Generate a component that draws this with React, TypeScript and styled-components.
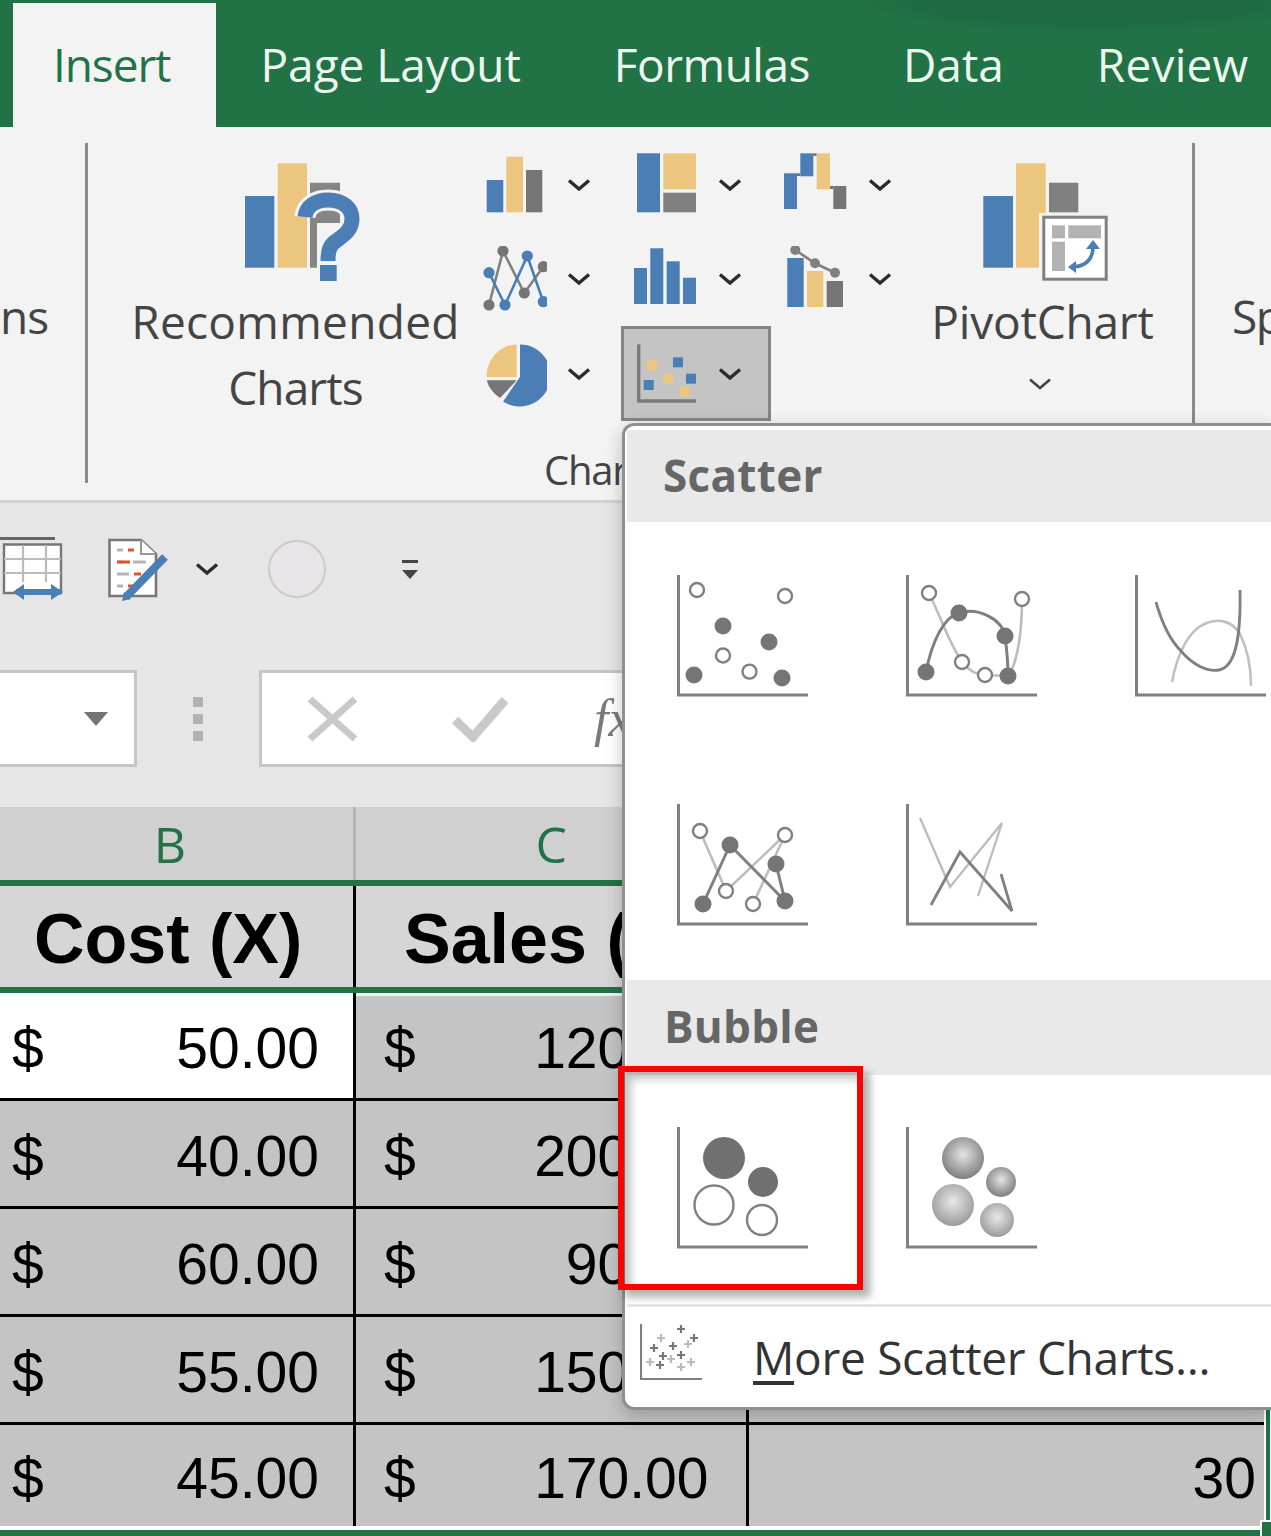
import React from "react";
import styled, { createGlobalStyle } from "styled-components";

const GREEN = "#217346";
const BLUE = "#4a7eb5";
const ORANGE = "#ecc67f";
const GRAY = "#757575";
const UI_FONT = '"Open Sans", "Noto Sans", sans-serif';
const SHEET_FONT = '"Liberation Sans", Arial, sans-serif';

const Global = createGlobalStyle`
  html, body { margin: 0; padding: 0; background: #fff; }
  * { box-sizing: border-box; }
`;

const Page = styled.div`
  position: relative;
  width: 1271px;
  height: 1536px;
  overflow: hidden;
  font-family: ${UI_FONT};
`;

/* ---------- tabs ---------- */
const TabBar = styled.div`
  display: flex;
  height: 127px;
  padding: 3px 0 0 13px;
  background: radial-gradient(ellipse 240px 34px at 1090px 0, #1f6a41 0 70%, transparent 100%), ${GREEN};
  overflow: hidden;
`;
const Tab = styled.div<{ $ls: string }>`
  flex: none;
  padding: 0 46.5px 3px;
  display: flex;
  align-items: center;
  height: 124px;
  font-size: 46px;
  letter-spacing: ${(p) => p.$ls};
  white-space: nowrap;
  color: #eef5f0;
`;
const ActiveTab = styled(Tab)`
  width: 203px;
  padding-left: 40px;
  margin-right: -2px;
  background: #f3f3f3;
  color: ${GREEN};
`;

/* ---------- ribbon ---------- */
const Ribbon = styled.div`
  display: flex;
  height: 376px;
  background: #f3f3f3;
  border-bottom: 3px solid #d2d2d2;
  color: #444;
  font-size: 46px;
  line-height: 66px;
  overflow: hidden;
`;
const Clipped = styled.div<{ $w: number; $top: number; $ml?: number; $ls?: string }>`
  flex: none;
  width: ${(p) => p.$w}px;
  margin-left: ${(p) => p.$ml ?? 0}px;
  padding-top: ${(p) => p.$top}px;
  letter-spacing: ${(p) => p.$ls ?? "0"};
  white-space: nowrap;
`;
const GroupRule = styled.div<{ $h: number; $ml?: number }>`
  flex: none;
  width: 3px;
  height: ${(p) => p.$h}px;
  margin-top: 16px;
  margin-left: ${(p) => p.$ml ?? 0}px;
  background: #8a8a8a;
`;
const ChartsGroup = styled.div`
  flex: none;
  width: 1104px;
  display: flex;
  flex-direction: column;
`;
const ChartsRow = styled.div`
  display: flex;
  height: 294px;
`;
const BigButton = styled.div<{ $ml: number; $w: number }>`
  flex: none;
  width: ${(p) => p.$w}px;
  margin-left: ${(p) => p.$ml}px;
  padding-top: 36px;
  display: flex;
  flex-direction: column;
  align-items: center;
  text-align: center;
  white-space: nowrap;
`;
const BigIcon = styled.svg<{ $shift: number }>`
  display: block;
  width: 125px;
  height: 118px;
  margin-bottom: 7px;
  margin-left: ${(p) => p.$shift}px;
`;
const BigLabel = styled.div<{ $ls: string }>`
  letter-spacing: ${(p) => p.$ls};
`;
const ChartGrid = styled.div`
  flex: none;
  width: 450px;
  margin-top: 11px;
  margin-left: 12px;
  display: grid;
  grid-template-columns: repeat(3, 150px);
  grid-template-rows: 94px 94px 95px;
`;
const ChartCell = styled.div<{ $selected?: boolean }>`
  display: flex;
  align-items: center;
  padding-left: 10px;
  background: ${(p) => (p.$selected ? "#c4c4c4" : "transparent")};
  box-shadow: ${(p) => (p.$selected ? "inset 0 0 0 3px #858585" : "none")};
`;
const ChartGlyph = styled.svg`
  flex: none;
  width: 66px;
  height: 66px;
`;
const ChevronMark = styled.svg<{ $ml?: number; $mt?: number }>`
  flex: none;
  display: block;
  width: 24px;
  height: 14px;
  margin-left: ${(p) => p.$ml ?? 0}px;
  margin-top: ${(p) => p.$mt ?? 0}px;
`;
const GroupLabel = styled.div`
  margin-top: 24px;
  padding-left: 456px;
  font-size: 40px;
  line-height: 50px;
  letter-spacing: -1.2px;
  white-space: nowrap;
`;

/* ---------- quick access + formula bar ---------- */
const Toolbars = styled.div`
  height: 304px;
  padding: 34px 0 40px;
  display: flex;
  flex-direction: column;
  gap: 70px;
  background: #e6e6e6;
`;
const QuickRow = styled.div`
  display: flex;
  align-items: center;
  height: 63px;
`;
const QuickIcon = styled.svg<{ $w: number; $ml: number }>`
  flex: none;
  width: ${(p) => p.$w}px;
  height: 64px;
  margin-left: ${(p) => p.$ml}px;
`;
const RecordDot = styled.div`
  flex: none;
  width: 58px;
  height: 58px;
  margin-left: 49px;
  border: 2px solid #cbcbcb;
  border-radius: 50%;
  background: #e8e4e8;
`;
const FormulaRow = styled.div`
  display: flex;
  height: 97px;
`;
const NameBox = styled.div`
  flex: none;
  width: 137px;
  border: 3px solid #c6c6c6;
  border-left: 0;
  background: #fff;
  display: flex;
  align-items: center;
  justify-content: flex-end;
  padding-right: 26px;
`;
const GripColumn = styled.div`
  flex: none;
  width: 122px;
  display: flex;
  flex-direction: column;
  align-items: center;
  justify-content: center;
  gap: 7px;
`;
const GripDot = styled.span`
  width: 10px;
  height: 10px;
  background: #b2b2b2;
`;
const FormulaBox = styled.div`
  flex: 1;
  border: 3px solid #c6c6c6;
  border-right: 0;
  background: #fff;
  display: flex;
  align-items: center;
  padding-left: 45px;
`;
const FormulaGlyph = styled.svg<{ $mr: number }>`
  flex: none;
  margin-right: ${(p) => p.$mr}px;
`;
const FxMark = styled.span`
  font-family: "Liberation Serif", serif;
  font-style: italic;
  font-size: 52px;
  color: #7a7a7a;
`;

/* ---------- sheet ---------- */
const ColumnHeads = styled.div`
  display: grid;
  grid-template-columns: 356px 392.5px 1fr;
  height: 73px;
  background: #d0d0d0;
`;
const ColumnHead = styled.div<{ $pr?: number }>`
  display: flex;
  align-items: center;
  justify-content: center;
  padding-right: ${(p) => p.$pr ?? 0}px;
  border-right: 3px solid #b4b4b4;
  font-size: 50px;
  letter-spacing: -1px;
  color: ${GREEN};
`;
const GreenRule = styled.div`
  height: 6px;
  background: ${GREEN};
`;
const HeaderRow = styled.div`
  display: grid;
  grid-template-columns: 356px 392.5px 1fr;
  height: 101px;
  background: #d6d6d6;
`;
const HeaderCell = styled.div<{ $pl: number }>`
  display: flex;
  align-items: center;
  padding: 4px 0 0 ${(p) => p.$pl}px;
  border-right: 3px solid #000;
  font-family: ${SHEET_FONT};
  font-size: 70px;
  font-weight: 700;
  color: #000;
  white-space: nowrap;
  overflow: hidden;
`;
const DataArea = styled.div`
  position: relative;
  margin-right: 1px;
  padding-right: 2px;
  border-right: 4px solid ${GREEN};
  background: #fff;
`;
const DataRow = styled.div<{ $last?: boolean }>`
  display: grid;
  grid-template-columns: 356px 392.5px 1fr;
  height: ${(p) => (p.$last ? 101 : 108)}px;
  background: #c4c4c4;
  border-bottom: ${(p) => (p.$last ? "0" : "3px solid #000")};
`;
const MoneyCell = styled.div<{ $white?: boolean; $pl: number; $pr: number; $first?: boolean }>`
  display: flex;
  align-items: center;
  justify-content: space-between;
  padding: 4px ${(p) => p.$pr}px 0 ${(p) => p.$pl}px;
  border-right: 3px solid #000;
  background: ${(p) => (p.$white ? "#fff" : "transparent")};
  box-shadow: ${(p) => (p.$first ? "inset 0 3px 0 #f2f2f2" : "none")};
  font-family: ${SHEET_FONT};
  font-size: 57px;
  color: #000;
`;
const CountCell = styled.div`
  display: flex;
  align-items: center;
  justify-content: flex-end;
  padding: 4px 8px 0 0;
  font-family: ${SHEET_FONT};
  font-size: 57px;
  color: #000;
`;
const SelectionFoot = styled.div`
  position: relative;
  height: 10px;
  border-top: 4px solid #fff;
  background: ${GREEN};
  &::after {
    content: "";
    box-sizing: border-box;
    position: absolute;
    right: 0;
    bottom: 0;
    width: 11px;
    height: 16px;
    background: ${GREEN};
    border: 2px solid #fff;
    border-right: 0;
    border-bottom: 0;
  }
`;

/* ---------- dropdown ---------- */
const Menu = styled.div`
  position: absolute;
  left: 622px;
  top: 423px;
  right: 0;
  height: 987px;
  padding: 4px 0 0 2px;
  background: #fff;
  border: 3px solid #8f8f8f;
  border-right: 0;
  border-radius: 12px 0 0 12px;
  box-shadow: 0 6px 18px rgba(0, 0, 0, 0.22);
`;
const MenuHeading = styled.div<{ $h: number; $pl: number }>`
  height: ${(p) => p.$h}px;
  padding: 0 0 3px ${(p) => p.$pl}px;
  display: flex;
  align-items: center;
  background: #e9e9e9;
  color: #666;
  font-size: 44px;
  font-weight: 700;
  letter-spacing: 0.3px;
`;
const MenuGrid = styled.div<{ $rowH: number }>`
  display: grid;
  grid-template-columns: repeat(3, 229px);
  grid-auto-rows: ${(p) => p.$rowH}px;
`;
const MenuItem = styled.div<{ $top: number }>`
  position: relative;
  padding: ${(p) => p.$top}px 0 0 50px;
`;
const SelectedItem = styled(MenuItem)`
  &::after {
    content: "";
    box-sizing: border-box;
    position: absolute;
    left: -9px;
    top: -9px;
    width: 245px;
    height: 224px;
    border: 6px solid #ff0000;
    box-shadow: 7px 7px 8px rgba(0, 0, 0, 0.32), inset 7px 7px 9px rgba(0, 0, 0, 0.24);
  }
`;
const ChartThumb = styled.svg`
  display: block;
  width: 131px;
  height: 122px;
`;
const MenuRule = styled.div`
  height: 3px;
  background: #e3e3ea;
`;
const MoreRow = styled.div`
  display: flex;
  align-items: center;
  height: 100px;
  padding-left: 13px;
  color: #333;
  font-size: 46px;
  white-space: nowrap;
`;
const MoreIcon = styled.svg`
  flex: none;
  width: 64px;
  height: 58px;
  margin-right: 49px;
  margin-top: -8px;
`;
const MoreLabel = styled.span`
  letter-spacing: -0.3px;
  u {
    text-underline-offset: 6px;
  }
`;

/* ---------- drawings ---------- */
const Chevron = ({ ml, mt, thin }: { ml?: number; mt?: number; thin?: boolean }) => (
  <ChevronMark $ml={ml} $mt={mt} viewBox="0 0 24 14">
    <path d="M2 2.5 12 11 22 2.5" fill="none" stroke={thin ? "#444" : "#2b2b2b"} strokeWidth={thin ? 2.6 : 3.4} />
  </ChevronMark>
);

const R = ({ x, y, x2, y2, c }: { x: number; y: number; x2: number; y2: number; c: string }) => (
  <rect x={x} y={y} width={x2 - x} height={y2 - y} fill={c} />
);

const GlyphColumn = () => (
  <>
    <R x={5.7} y={28} x2={22.3} y2={60.3} c={BLUE} />
    <R x={25.3} y={4.7} x2={42} y2={60.3} c={ORANGE} />
    <R x={45} y={18} x2={61.3} y2={60.3} c={GRAY} />
  </>
);
const GlyphTreemap = () => (
  <>
    <R x={6} y={1.3} x2={29} y2={60.3} c={BLUE} />
    <R x={32.3} y={1.3} x2={65} y2={37.3} c={ORANGE} />
    <R x={32.3} y={40.7} x2={65} y2={60.3} c="#808080" />
  </>
);
const GlyphWaterfall = () => (
  <>
    <R x={16} y={21.3} x2={19.3} y2={24} c={GRAY} />
    <R x={32.3} y={1.3} x2={35.7} y2={4} c={GRAY} />
    <R x={49} y={34} x2={52.3} y2={37} c={GRAY} />
    <R x={3} y={21.3} x2={16} y2={57} c={BLUE} />
    <R x={19.3} y={1.3} x2={32.3} y2={24.3} c={BLUE} />
    <R x={35.7} y={1.3} x2={49} y2={37.3} c={ORANGE} />
    <R x={52.3} y={34} x2={65.3} y2={57} c={GRAY} />
  </>
);
const GlyphLines = () => (
  <>
    <polyline points="8,59 22,5 43.3,47 62.3,20.7" fill="none" stroke="#808080" strokeWidth="2.6" />
    <polyline points="8,26.7 24,59 46.3,10 62.3,55.7" fill="none" stroke={BLUE} strokeWidth="2.6" />
    {[[8, 59], [22, 5], [43.3, 47], [62.3, 20.7]].map(([x, y]) => (
      <circle key={`${x}g`} cx={x} cy={y} r={5.6} fill={GRAY} />
    ))}
    {[[8, 26.7], [24, 59], [46.3, 10], [62.3, 55.7]].map(([x, y]) => (
      <circle key={`${x}b`} cx={x} cy={y} r={5.6} fill={BLUE} />
    ))}
  </>
);
const GlyphHistogram = () => (
  <>
    <R x={3} y={22} x2={16} y2={58} c={BLUE} />
    <R x={19.3} y={2.3} x2={32.3} y2={58} c={BLUE} />
    <R x={35.7} y={15.3} x2={48.7} y2={58} c={BLUE} />
    <R x={52} y={31.7} x2={65} y2={58} c={BLUE} />
  </>
);
const GlyphCombo = () => (
  <>
    <R x={6.3} y={12} x2={22.7} y2={61} c={BLUE} />
    <R x={26} y={25} x2={42.3} y2={61} c={ORANGE} />
    <R x={45.7} y={35} x2={62} y2={61} c={GRAY} />
    <polyline points="14.3,4 34,17.3 54,26.7" fill="none" stroke="#808080" strokeWidth="2.6" />
    {[[14.3, 4], [34, 17.3], [54, 26.7]].map(([x, y]) => (
      <circle key={x} cx={x} cy={y} r={5} fill="#808080" />
    ))}
  </>
);
const GlyphPie = () => (
  <>
    <path d="M39 3.4A31 31 0 1 1 22 60.5L39 36Z" fill={BLUE} />
    <path d="M35.7 3.4A31 31 0 0 0 5.7 36H35.7Z" fill={ORANGE} />
    <path d="M5.7 39.3H35.7L19 57A31 31 0 0 1 5.7 39.3Z" fill={GRAY} />
  </>
);
const GlyphScatter = () => (
  <>
    <path d="M7.7 3.3V60H65" fill="none" stroke="#7a7a7a" strokeWidth="3.3" />
    <rect x="16" y="19.3" width="10" height="10" fill={ORANGE} />
    <rect x="42" y="16.3" width="10" height="10" fill={BLUE} />
    <rect x="32.3" y="32.7" width="10" height="10" fill={ORANGE} />
    <rect x="55" y="32.7" width="10" height="10" fill={BLUE} />
    <rect x="12.7" y="39" width="10" height="10" fill={BLUE} />
    <rect x="48.7" y="45.7" width="10" height="10" fill={ORANGE} />
  </>
);

const Axis = () => <path d="M1.5 0V120H131" fill="none" stroke="#808080" strokeWidth="3" />;
const Hollow = ({ x, y, r = 7 }: { x: number; y: number; r?: number }) => (
  <circle cx={x} cy={y} r={r} fill="#fff" stroke="#808080" strokeWidth="2.4" />
);
const Solid = ({ x, y, r = 8.5 }: { x: number; y: number; r?: number }) => (
  <circle cx={x} cy={y} r={r} fill="#757575" />
);

const ThumbMarkers = () => (
  <ChartThumb viewBox="0 0 131 122">
    <Axis />
    <Hollow x={20} y={15} />
    <Hollow x={108} y={21} />
    <Hollow x={46} y={80.5} />
    <Hollow x={72.5} y={96.6} />
    <Solid x={46} y={51} />
    <Solid x={92} y={67} />
    <Solid x={17} y={100} />
    <Solid x={105} y={103} />
  </ChartThumb>
);
const ThumbSmoothMarkers = () => (
  <ChartThumb viewBox="0 0 131 122">
    <Axis />
    <path d="M23 18C36 45 44 70 56 87C64 97 72 100 79 100L102 101C112 88 116 55 116 24" fill="none" stroke="#bdbdbd" strokeWidth="2.6" />
    <path d="M20 97C26 66 38 42 53 38C72 32 96 44 99 61C101 76 102 90 102 101" fill="none" stroke="#808080" strokeWidth="3" />
    <Hollow x={23} y={18} />
    <Hollow x={116} y={24} />
    <Hollow x={56} y={87} />
    <Hollow x={79} y={100} />
    <Solid x={20} y={97} />
    <Solid x={53} y={38} />
    <Solid x={99} y={61} />
    <Solid x={102} y={101} />
  </ChartThumb>
);
const ThumbSmooth = () => (
  <ChartThumb viewBox="0 0 131 122">
    <Axis />
    <path d="M37 107C41 85 50 62 64 52C80 42 96 44 105 59C113 75 116 92 116 111" fill="none" stroke="#c0c0c0" strokeWidth="2.6" />
    <path d="M21 27C28 52 38 68 46 76C58 90 72 97 84 95C100 92 106 65 105 15" fill="none" stroke="#808080" strokeWidth="2.8" />
  </ChartThumb>
);
const ThumbStraightMarkers = () => (
  <ChartThumb viewBox="0 0 131 122">
    <Axis />
    <polyline points="23,27 49,87 108,31 76,100" fill="none" stroke="#bdbdbd" strokeWidth="2.6" />
    <polyline points="26,100 53,41 108,97 99,60" fill="none" stroke="#808080" strokeWidth="3" />
    <Hollow x={23} y={27} />
    <Hollow x={108} y={31} />
    <Hollow x={49} y={87} />
    <Hollow x={76} y={100} />
    <Solid x={53} y={41} />
    <Solid x={99} y={60} />
    <Solid x={26} y={100} />
    <Solid x={108} y={97} />
  </ChartThumb>
);
const ThumbStraight = () => (
  <ChartThumb viewBox="0 0 131 122">
    <Axis />
    <polyline points="14,14 44,83 96,19 72,92" fill="none" stroke="#bdbdbd" strokeWidth="2.4" />
    <polyline points="25,101 54,48 106,107 95,70" fill="none" stroke="#808080" strokeWidth="2.8" />
  </ChartThumb>
);
const ThumbBubble = () => (
  <ChartThumb viewBox="0 0 131 122">
    <Axis />
    <circle cx={47} cy={31} r={21} fill="#707070" />
    <circle cx={86} cy={55} r={15} fill="#707070" />
    <circle cx={37} cy={78} r={19.5} fill="#fff" stroke="#808080" strokeWidth="2.4" />
    <circle cx={85} cy={93} r={15} fill="#fff" stroke="#808080" strokeWidth="2.4" />
  </ChartThumb>
);
const ThumbBubble3d = () => (
  <ChartThumb viewBox="0 0 131 122">
    <defs>
      <radialGradient id="ballDark" cx="50%" cy="42%" r="58%">
        <stop offset="0%" stopColor="#e4e4e4" />
        <stop offset="100%" stopColor="#7d7d7d" />
      </radialGradient>
      <radialGradient id="ballLight" cx="50%" cy="42%" r="58%">
        <stop offset="0%" stopColor="#e8e8e8" />
        <stop offset="100%" stopColor="#9a9a9a" />
      </radialGradient>
    </defs>
    <Axis />
    <circle cx={57} cy={31} r={21} fill="url(#ballDark)" />
    <circle cx={95} cy={55} r={15} fill="url(#ballDark)" />
    <circle cx={47} cy={78} r={21} fill="url(#ballLight)" />
    <circle cx={91} cy={93} r={17} fill="url(#ballLight)" />
  </ChartThumb>
);

const MORE_POINTS: [number, number, boolean][] = [
  [41, 5, true], [54, 14, true], [21, 14, false], [14, 24, true], [33, 22, true], [48, 20, false],
  [23, 32, true], [41, 31, true], [10, 38, false], [20, 41, true], [31, 35, false], [41, 43, false], [51, 38, false],
];

const RecommendedIcon = () => (
  <BigIcon $shift={24} viewBox="0 0 125 118">
    <R x={0} y={33} x2={29.3} y2={104.7} c={BLUE} />
    <R x={32.7} y={0.3} x2={62} y2={104.7} c={ORANGE} />
    <R x={65} y={19.7} x2={95} y2={60} c="#858585" />
    <R x={65} y={60} x2={72} y2={104.7} c="#858585" />
    <path d="M60 54C61 43 71 37 83 37C98 37 107 45 107 56C107 68 97 73 91 78C85 82 83 87 83 98" fill="none" stroke="#f3f3f3" strokeWidth="21" />
    <path d="M60 54C61 43 71 37 83 37C98 37 107 45 107 56C107 68 97 73 91 78C85 82 83 87 83 98" fill="none" stroke={BLUE} strokeWidth="15" />
    <R x={75} y={102} x2={91.7} y2={118} c={BLUE} />
  </BigIcon>
);
const PivotIcon = () => (
  <BigIcon $shift={6} viewBox="0 0 125 118">
    <R x={0.3} y={33} x2={30} y2={104.7} c={BLUE} />
    <R x={33} y={0.3} x2={62.7} y2={104.7} c={ORANGE} />
    <R x={66} y={19.7} x2={95.3} y2={49.3} c="#808080" />
    <rect x="56" y="50" width="69" height="68" fill="#f3f3f3" />
    <rect x="60.8" y="54.2" width="62.4" height="62" fill="#fff" stroke="#808080" strokeWidth="3" />
    <R x={69} y={62.3} x2={82} y2={75.3} c="#b3b3b3" />
    <R x={85.3} y={62.3} x2={118} y2={75.3} c="#b3b3b3" />
    <R x={69} y={78.7} x2={82} y2={108} c="#b3b3b3" />
    <path d="M90 104C103 103 110 96 110 84" fill="none" stroke={BLUE} strokeWidth="3.6" />
    <path d="M85 104 93 98V110ZM110 77 117 86H103Z" fill={BLUE} />
  </BigIcon>
);

const Rows = [
  { cost: "50.00", sales: "120.00" },
  { cost: "40.00", sales: "200.00" },
  { cost: "60.00", sales: "90.00" },
  { cost: "55.00", sales: "150.00" },
  { cost: "45.00", sales: "170.00" },
];

export default function App() {
  return (
    <Page>
      <Global />
      <TabBar>
        <ActiveTab $ls="-1.1px">Insert</ActiveTab>
        <Tab $ls="-0.05px">Page Layout</Tab>
        <Tab $ls="-0.5px">Formulas</Tab>
        <Tab $ls="0px">Data</Tab>
        <Tab $ls="0.2px">Review</Tab>
      </TabBar>

      <Ribbon>
        <Clipped $w={85} $top={156} $ls="-1px">ns</Clipped>
        <GroupRule $h={340} />
        <ChartsGroup>
          <ChartsRow>
            <BigButton $ml={44} $w={327}>
              <RecommendedIcon />
              <BigLabel $ls="0.3px">Recommended</BigLabel>
              <BigLabel $ls="-0.9px">Charts</BigLabel>
            </BigButton>
            <ChartGrid>
              <ChartCell><ChartGlyph viewBox="0 0 66 66"><GlyphColumn /></ChartGlyph><Chevron ml={20} /></ChartCell>
              <ChartCell><ChartGlyph viewBox="0 0 66 66"><GlyphTreemap /></ChartGlyph><Chevron ml={21} /></ChartCell>
              <ChartCell><ChartGlyph viewBox="0 0 66 66"><GlyphWaterfall /></ChartGlyph><Chevron ml={21} /></ChartCell>
              <ChartCell><ChartGlyph viewBox="0 0 66 66"><GlyphLines /></ChartGlyph><Chevron ml={20} /></ChartCell>
              <ChartCell><ChartGlyph viewBox="0 0 66 66"><GlyphHistogram /></ChartGlyph><Chevron ml={21} /></ChartCell>
              <ChartCell><ChartGlyph viewBox="0 0 66 66"><GlyphCombo /></ChartGlyph><Chevron ml={21} /></ChartCell>
              <ChartCell><ChartGlyph viewBox="0 0 66 66"><GlyphPie /></ChartGlyph><Chevron ml={20} /></ChartCell>
              <ChartCell $selected><ChartGlyph viewBox="0 0 66 66"><GlyphScatter /></ChartGlyph><Chevron ml={21} /></ChartCell>
            </ChartGrid>
            <BigButton $ml={11} $w={221}>
              <PivotIcon />
              <BigLabel $ls="-0.2px">PivotChart</BigLabel>
              <Chevron thin mt={23} ml={-5} />
            </BigButton>
          </ChartsRow>
          <GroupLabel>Charts</GroupLabel>
        </ChartsGroup>
        <GroupRule $h={300} />
        <Clipped $w={60} $top={156} $ml={37} $ls="-1.4px">Sp</Clipped>
      </Ribbon>

      <Toolbars>
        <QuickRow>
          <QuickIcon $w={66} $ml={0} viewBox="0 0 66 64">
            <path d="M0 1.5H55" stroke="#666" strokeWidth="3" />
            <path d="M4 7.5H61V56H4Z" fill="#fff" stroke="#777" strokeWidth="2.4" />
            <path d="M23 8V45M46 8V45M4 22H61M4 36H61" stroke="#bbb" strokeWidth="2.2" />
            <path d="M16 55H60" stroke={BLUE} strokeWidth="6" />
            <path d="M13 55 24 47V63ZM63 55 51 47V63Z" fill={BLUE} />
          </QuickIcon>
          <QuickIcon $w={62} $ml={42} viewBox="0 0 62 64">
            <path d="M1.5 3H33L48 17V59H1.5Z" fill="#fff" stroke="#777" strokeWidth="2.6" />
            <path d="M33 3V17H48" fill="#fff" stroke="#999" strokeWidth="2" />
            <path d="M9 13H15M9 25H15M25 25H38M9 37H21M9 49H15" stroke="#b5b5b5" strokeWidth="3" />
            <path d="M20 13H26M9 25H22M26 37H33M20 49H25" stroke="#e0522c" strokeWidth="3" />
            <path d="M18 60 57 20" stroke={BLUE} strokeWidth="8" />
            <path d="M14 64 16 55 23 62Z" fill={BLUE} />
          </QuickIcon>
          <Chevron ml={25} />
          <RecordDot />
          <QuickIcon $w={18} $ml={75} viewBox="0 0 18 20">
            <path d="M1 2.5H17" stroke="#444" strokeWidth="3" />
            <path d="M1 11H17L9 20Z" fill="#444" />
          </QuickIcon>
        </QuickRow>
        <FormulaRow>
          <NameBox>
            <svg width="24" height="14" viewBox="0 0 24 14">
              <path d="M0 0H24L12 14Z" fill="#757575" />
            </svg>
          </NameBox>
          <GripColumn>
            <GripDot />
            <GripDot />
            <GripDot />
          </GripColumn>
          <FormulaBox>
            <FormulaGlyph $mr={93} width="52" height="46" viewBox="0 0 52 46">
              <path d="M3 3 48 43M48 3 3 43" fill="none" stroke="#c9c9c9" strokeWidth="7" />
            </FormulaGlyph>
            <FormulaGlyph $mr={86} width="56" height="46" viewBox="0 0 56 46">
              <path d="M3 24 21 41 53 4" fill="none" stroke="#c9c9c9" strokeWidth="9" />
            </FormulaGlyph>
            <FxMark>fx</FxMark>
          </FormulaBox>
        </FormulaRow>
      </Toolbars>

      <ColumnHeads>
        <ColumnHead $pr={14}>B</ColumnHead>
        <ColumnHead>C</ColumnHead>
        <div />
      </ColumnHeads>
      <GreenRule />
      <HeaderRow>
        <HeaderCell $pl={34}>Cost (X)</HeaderCell>
        <HeaderCell $pl={48}>Sales (Y)</HeaderCell>
        <div />
      </HeaderRow>
      <GreenRule />
      <DataArea>
        {Rows.map((row, i) => (
          <DataRow key={row.cost} $last={i === Rows.length - 1}>
            <MoneyCell $white={i === 0} $pl={12} $pr={34}>
              <span>$</span>
              <span>{row.cost}</span>
            </MoneyCell>
            <MoneyCell $pl={28} $pr={37} $first={i === 0}>
              <span>$</span>
              <span>{row.sales}</span>
            </MoneyCell>
            <CountCell>{i === Rows.length - 1 ? "30" : ""}</CountCell>
          </DataRow>
        ))}
      </DataArea>
      <SelectionFoot />

      <Menu>
        <MenuHeading $h={92} $pl={36}>Scatter</MenuHeading>
        <MenuGrid $rowH={229}>
          <MenuItem $top={53}><ThumbMarkers /></MenuItem>
          <MenuItem $top={53}><ThumbSmoothMarkers /></MenuItem>
          <MenuItem $top={53}><ThumbSmooth /></MenuItem>
          <MenuItem $top={53}><ThumbStraightMarkers /></MenuItem>
          <MenuItem $top={53}><ThumbStraight /></MenuItem>
        </MenuGrid>
        <MenuHeading $h={95} $pl={37}>Bubble</MenuHeading>
        <MenuGrid $rowH={229}>
          <SelectedItem $top={52}><ThumbBubble /></SelectedItem>
          <MenuItem $top={52}><ThumbBubble3d /></MenuItem>
        </MenuGrid>
        <MenuRule />
        <MoreRow>
          <MoreIcon viewBox="0 0 64 58">
            <path d="M1 0V55H62" fill="none" stroke="#808080" strokeWidth="2.2" />
            {MORE_POINTS.map(([x, y, dark]) => (
              <path
                key={`${x}-${y}`}
                d={`M${x - 4} ${y}H${x + 4}M${x} ${y - 4}V${y + 4}`}
                stroke={dark ? "#777" : "#bbb"}
                strokeWidth="2.2"
              />
            ))}
          </MoreIcon>
          <MoreLabel><u>M</u>ore Scatter Charts...</MoreLabel>
        </MoreRow>
      </Menu>
    </Page>
  );
}
